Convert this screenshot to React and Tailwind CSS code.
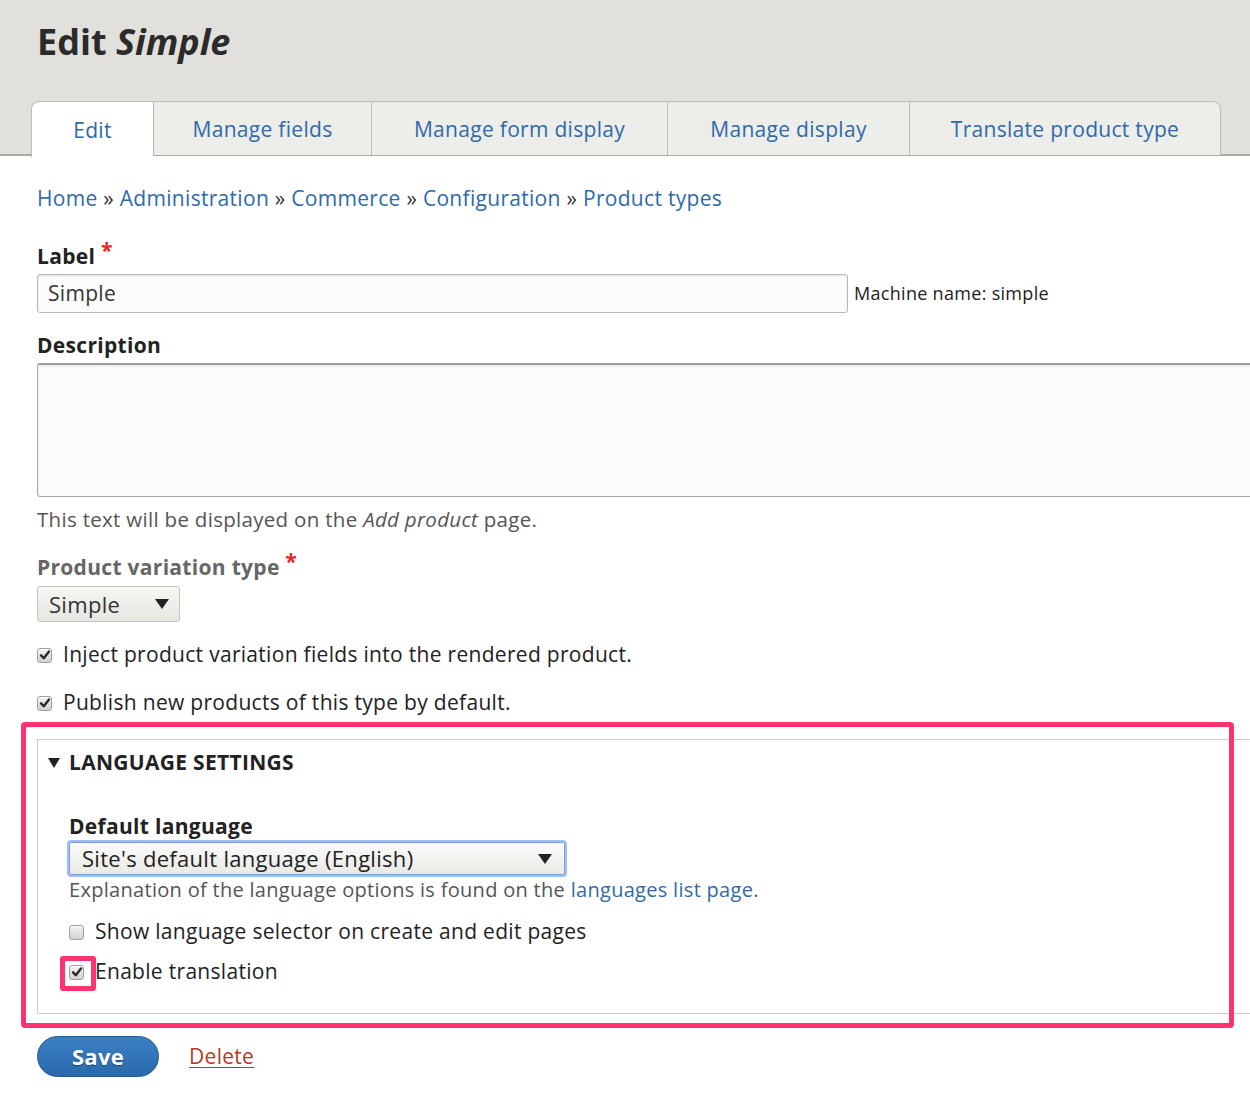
import React from 'react';

const font = { fontFamily: '"Open Sans", "DejaVu Sans", sans-serif' };

function Check({ checked }) {
    return (
        <span className="inline-flex h-[15px] w-[15px] shrink-0 items-center justify-center rounded-[3px] border border-[#a0a0a0] bg-gradient-to-b from-[#f4f4f4] to-[#d2d2d2] shadow-[inset_0_1px_0_#fff]">
            {checked && (
                <svg viewBox="0 0 12 12" className="h-[12px] w-[12px]">
                    <path d="M2 6.3 L4.8 9.2 L10 2.4" fill="none" stroke="#2b2b2b" strokeWidth="2.4" strokeLinecap="round" strokeLinejoin="round" />
                </svg>
            )}
        </span>
    );
}

function Arrow({ className = '' }) {
    return (
        <svg viewBox="0 0 14 10" className={`h-[10px] w-[14px] ${className}`}>
            <path d="M0 0 H14 L7 10 Z" fill="#222" />
        </svg>
    );
}

export default function App() {
    const tabs = ['Edit', 'Manage fields', 'Manage form display', 'Manage display', 'Translate product type'];
    const tabWidths = ['w-[122px]', 'w-[218px]', 'w-[296px]', 'w-[242px]', 'w-[312px]'];
    const crumbs = ['Home', 'Administration', 'Commerce', 'Configuration', 'Product types'];

    return (
        <div className="relative h-[1116px] w-[1250px] overflow-hidden bg-white text-[#333] tracking-[0.3px]" style={font}>
            {/* header */}
            <header className="h-[156px] border-b-2 border-[#a9a9a6] bg-[#e1e0dc]">
                <h1 className="h-[101px] pl-[37px] pt-[16px] text-[36px] leading-[52px] font-bold tracking-normal text-[#2b2b2b]">
                    Edit <em className="italic">Simple</em>
                </h1>
                <nav className="flex h-[54px] pl-[31px]">
                    {tabs.map((t, i) => (
                        <div
                            key={t}
                            className={`${tabWidths[i]} flex items-center justify-center border-t border-[#bdbdb8] pt-[3px] text-[21px] text-[#2f6aa9] ${
                                i === 0
                                    ? 'relative z-10 -mb-[2px] h-[56px] rounded-tl-[8px] border-l bg-white'
                                    : 'border-l bg-[#ededea]'
                            } ${i === tabs.length - 1 ? 'rounded-tr-[8px] border-r' : ''}`}
                        >
                            {t}
                        </div>
                    ))}
                </nav>
            </header>

            <main className="pl-[37px]">
                {/* breadcrumb */}
                <div className="mt-[27px] h-[30px] text-[21px] leading-[30px] text-[#2f6aa9]">
                    {crumbs.map((c, i) => (
                        <span key={c}>
                            {c}
                            {i < crumbs.length - 1 && <span className="text-[#333]"> » </span>}
                        </span>
                    ))}
                </div>

                {/* label */}
                <div className="mt-[28px] h-[30px] text-[21px] leading-[30px] font-bold text-[#222]">
                    Label <span className="relative -top-[6px] text-[#e0291d]">*</span>
                </div>
                <div className="mt-[3px] flex items-center">
                    <div className="flex h-[39px] w-[811px] items-center rounded-[3px] border border-[#b8b8b8] bg-[#fcfcfa] pl-[10px] text-[21px] text-[#333] shadow-[inset_0_1px_2px_rgba(0,0,0,0.12)]">
                        Simple
                    </div>
                    <span className="ml-[6px] text-[18px] text-[#222]">Machine name: simple</span>
                </div>

                {/* description */}
                <div className="mt-[17px] h-[30px] text-[21px] leading-[30px] font-bold text-[#222]">Description</div>
                <div className="mt-[3px] h-[134px] w-[1240px] rounded-[3px] border border-[#a6a6a6] border-t-2 border-t-[#9c9c9c] bg-[#fbfbfa] shadow-[inset_0_2px_3px_rgba(0,0,0,0.06)]" />
                <div className="mt-[8px] h-[28px] text-[20.5px] leading-[28px] text-[#555]">
                    This text will be displayed on the <em className="italic">Add product</em> page.
                </div>

                {/* product variation type */}
                <div className="mt-[19px] h-[30px] text-[21px] leading-[30px] font-bold text-[#666]">
                    Product variation type <span className="relative -top-[6px] text-[#e0291d]">*</span>
                </div>
                <div className="mt-[4px] flex h-[36px] w-[143px] items-center justify-between rounded-[3px] border border-[#c4c4c0] bg-gradient-to-b from-[#f6f6f3] to-[#e6e6e2] pl-[11px] pr-[10px] text-[22px] text-[#333]">
                    Simple
                    <Arrow />
                </div>

                <label className="mt-[18px] flex h-[30px] items-center gap-[11px] text-[21px] text-[#222]">
                    <Check checked />
                    Inject product variation fields into the rendered product.
                </label>
                <label className="mt-[18px] flex h-[30px] items-center gap-[11px] text-[21px] text-[#222]">
                    <Check checked />
                    Publish new products of this type by default.
                </label>

                {/* language settings */}
                <fieldset className="mt-[21px] h-[275px] w-[1240px] border border-[#cccccc] pl-[10px]">
                    <div className="mt-[8px] flex h-[30px] items-center gap-[9px] text-[21px] font-bold uppercase text-[#222]">
                        <svg viewBox="0 0 12 10" className="h-[10px] w-[12px]">
                            <path d="M0 0 H12 L6 10 Z" fill="#222" />
                        </svg>
                        Language settings
                    </div>
                    <div className="pl-[21px]">
                        <div className="mt-[33px] h-[30px] text-[21px] leading-[30px] font-bold text-[#222]">Default language</div>
                        <div className="mt-[1px] flex h-[33px] w-[496px] items-center justify-between rounded-[2px] border border-[#7a9fd6] bg-gradient-to-b from-[#fbfbfa] to-[#e9e9e5] pl-[12px] pr-[12px] text-[22px] text-[#222] shadow-[0_0_0_2px_#9dbff3]">
                            Site's default language (English)
                            <Arrow />
                        </div>
                        <div className="mt-[1px] h-[28px] text-[20px] leading-[28px] text-[#555]">
                            Explanation of the language options is found on the{' '}
                            <span className="text-[#2f6aa9]">languages list page</span>.
                        </div>
                        <label className="mt-[13px] flex h-[30px] items-center gap-[11px] text-[21px] text-[#222]">
                            <Check />
                            Show language selector on create and edit pages
                        </label>
                        <label className="mt-[10px] flex h-[30px] items-center gap-[11px] text-[21px] text-[#222]">
                            <span className="relative flex">
                                <Check checked />
                                <span className="absolute -left-[9px] -top-[9px] h-[35px] w-[36px] rounded-[3px] border-[5px] border-[#ff3370]" />
                            </span>
                            Enable translation
                        </label>
                    </div>
                </fieldset>

                {/* actions */}
                <div className="mt-[22px] flex items-center gap-[30px]">
                    <button className="h-[41px] w-[122px] rounded-full border border-[#1f5a95] bg-gradient-to-b from-[#3b7fc4] to-[#2a6aab] text-[22px] font-bold text-white [text-shadow:0_1px_1px_rgba(0,0,0,0.4)]">
                        Save
                    </button>
                    <span className="text-[21px] text-[#b23a26] underline decoration-1 underline-offset-[3px]">Delete</span>
                </div>
            </main>

            {/* annotation box around language settings */}
            <div className="absolute left-[21px] top-[722px] h-[306px] w-[1213px] rounded-[4px] border-[5px] border-[#ff3370]" />
        </div>
    );
}
